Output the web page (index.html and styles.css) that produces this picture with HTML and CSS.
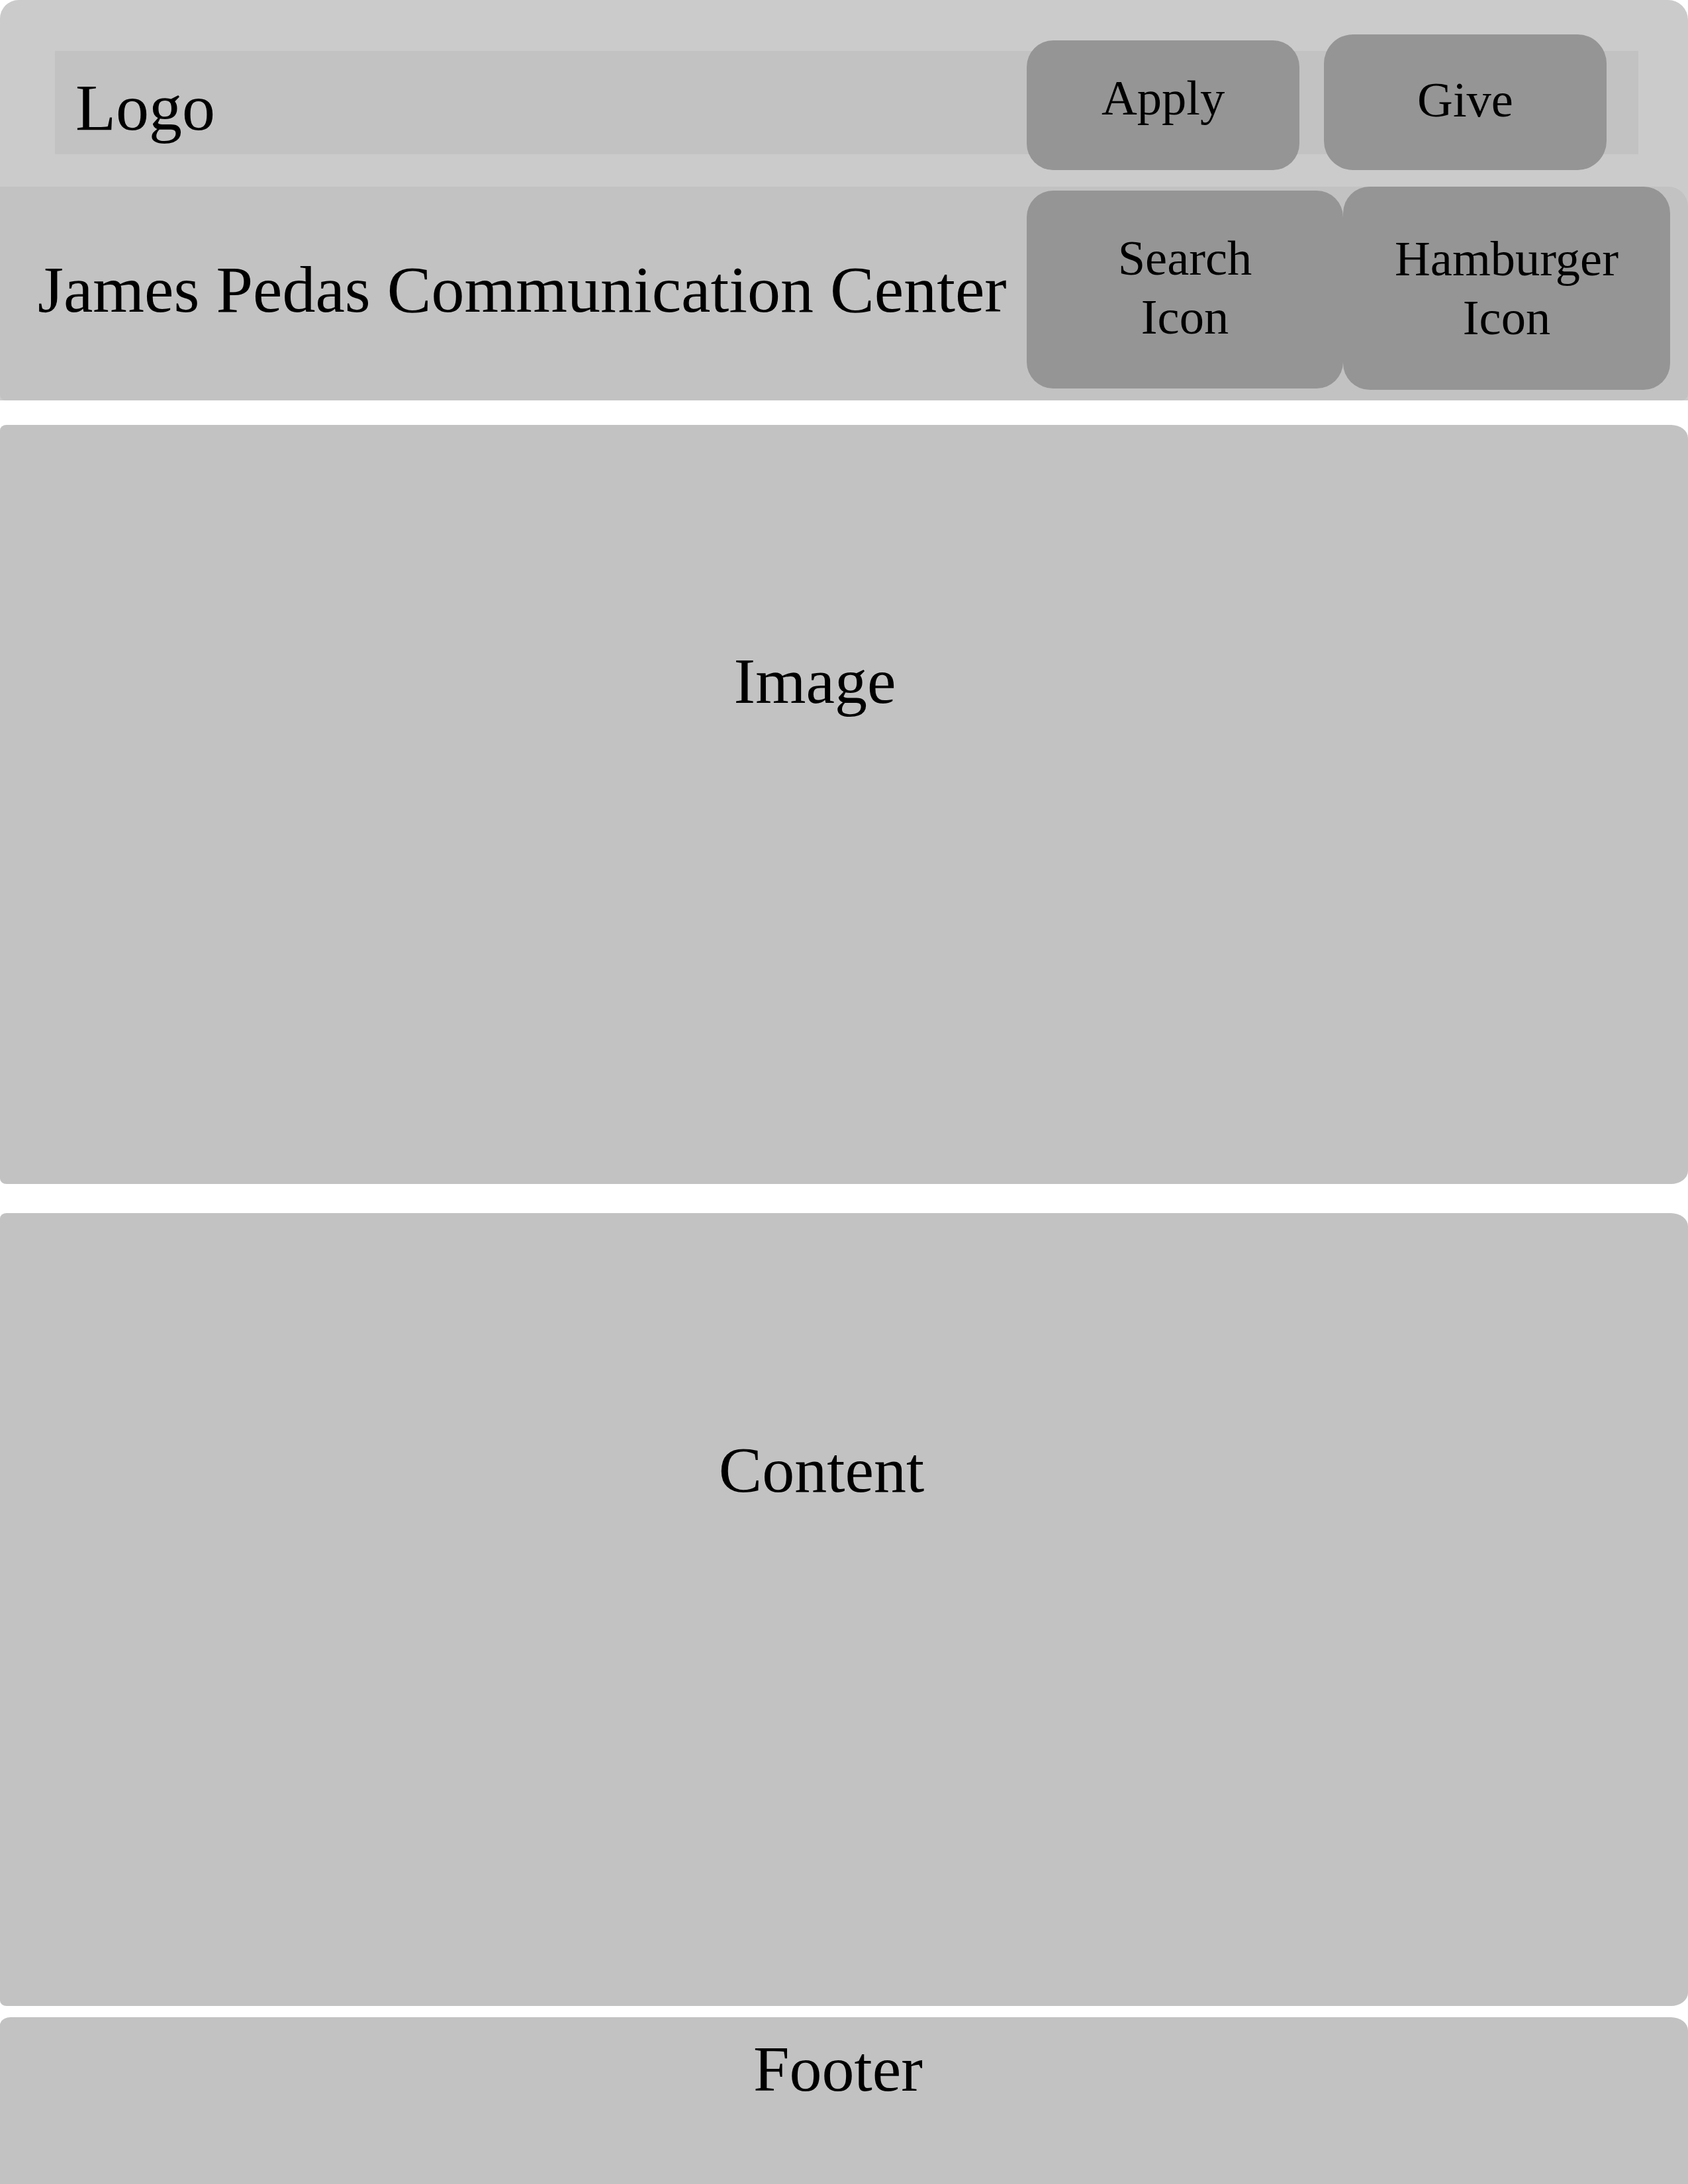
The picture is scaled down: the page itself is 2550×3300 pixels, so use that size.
FILE: index.html
```html
<!DOCTYPE html>
<html lang="en">
<head>
<meta charset="utf-8">
<title>James Pedas Communication Center</title>
<link rel="stylesheet" href="styles.css">
</head>
<body>
<header class="header">
  <div class="topbar">
    <div class="logobar">
      <div class="logo">Logo</div>
      <div class="top-actions">
        <a class="btn btn-apply">Apply</a>
        <a class="btn btn-give">Give</a>
      </div>
    </div>
  </div>
  <div class="navrow">
    <h1 class="title">James Pedas Communication Center</h1>
    <div class="nav-actions">
      <button class="btn btn-search">Search<br>Icon</button>
      <button class="btn btn-menu">Hamburger<br>Icon</button>
    </div>
  </div>
</header>
<main>
  <section class="block block-image"><span class="label label-image">Image</span></section>
  <section class="block block-content"><span class="label label-content">Content</span></section>
</main>
<footer class="block block-footer"><span class="label label-footer">Footer</span></footer>
</body>
</html>
```

FILE: styles.css
```css
* { box-sizing: border-box; }
html, body {
  margin: 0;
  padding: 0;
  background: #ffffff;
}
body {
  font-family: "Liberation Serif", "Times New Roman", serif;
  color: #000;
  overflow: hidden;
}

.header {
  background: #cbcbcb;
  border-radius: 28px 30px 0 0;
}

.topbar {
  height: 282px;
  padding: 77px 75px 49px 83px;
}

.logobar {
  height: 156px;
  background: #c2c2c2;
  display: flex;
  align-items: center;
}

.logo {
  font-size: 100px;
  padding-left: 31px;
  margin-top: 14px;
}

.top-actions {
  margin-left: auto;
  margin-right: 48px;
  display: flex;
  align-items: center;
  gap: 37px;
}

.btn {
  display: flex;
  align-items: center;
  justify-content: center;
  text-align: center;
  background: #959595;
  border: none;
  color: #000;
  font-family: "Liberation Serif", "Times New Roman", serif;
  font-size: 74.5px;
  line-height: 89px;
  border-radius: 40px;
  padding: 0;
}

.btn-apply {
  width: 412px;
  height: 196px;
  margin-top: 8px;
  padding-bottom: 22px;
  line-height: normal;
}

.btn-give {
  width: 427px;
  height: 205px;
  margin-top: -1px;
  padding-bottom: 6px;
  border-radius: 44px;
  line-height: normal;
}

.navrow {
  height: 323px;
  background: #c2c2c2;
  border-radius: 0 30px 10px 8px;
  display: flex;
  align-items: center;
}

.title {
  margin: 0;
  padding-left: 57px;
  font-size: 100px;
  font-weight: normal;
  margin-top: -12px;
  white-space: nowrap;
}

.nav-actions {
  margin-left: auto;
  margin-right: 27px;
  align-self: stretch;
  display: flex;
  align-items: flex-start;
}

.btn-search {
  width: 478px;
  height: 299px;
  margin-top: 6px;
  padding-bottom: 6px;
}

.btn-menu {
  width: 494px;
  height: 307px;
}

.block {
  background: #c2c2c2;
  text-align: center;
}

.label {
  display: block;
  font-size: 98px;
  line-height: normal;
}

.block-image {
  margin-top: 37px;
  height: 1147px;
  border-radius: 10px 26px 26px 10px / 8px 20px 20px 8px;
  padding-top: 331px;
}
.label-image { padding-right: 88px; }

.block-content {
  margin-top: 44px;
  height: 1198px;
  border-radius: 10px 26px 26px 10px / 8px 20px 20px 8px;
  padding-top: 332px;
}
.label-content { padding-right: 68px; }

.block-footer {
  margin-top: 17px;
  height: 252px;
  border-radius: 16px 26px 0 0 / 12px 20px 0 0;
  padding-top: 22px;
}
.label-footer { padding-right: 18px; }
```
